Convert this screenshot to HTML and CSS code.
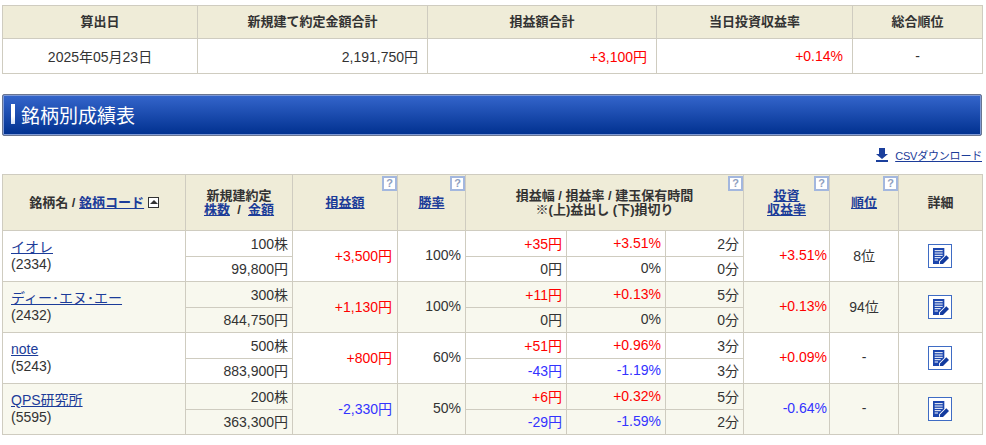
FILE: index.html
```html
<!DOCTYPE html>
<html lang="ja">
<head>
<meta charset="utf-8">
<title>銘柄別成績表</title>
<link rel="stylesheet" href="styles.css">
</head>
<body>
<svg class="sprites" width="0" height="0" aria-hidden="true">
  <symbol id="memo" viewBox="0 0 24 24">
    <path d="M0 0H17V12L9 20V24H0Z" fill="#1b45ad"/>
    <path d="M2.500 4H14.500M2.500 7.500H14.500M2.500 11H14.500M2.500 14.500H11.500M2.500 18H7.500" stroke="#fff" stroke-width="1.500" fill="none"/>
    <path d="M11 20L20 11L24 15L15 24L10 24Z" fill="#123a9e"/>
  </symbol>
</svg>
<table class="summary">
  <colgroup><col class="s1"><col class="s2"><col class="s3"><col class="s4"><col class="s5"></colgroup>
  <tr><th>算出日</th><th>新規建て約定金額合計</th><th>損益額合計</th><th>当日投資収益率</th><th>総合順位</th></tr>
  <tr><td class="c">2025年05月23日</td><td class="r">2,191,750円</td><td class="r up">+3,100円</td><td class="r up">+0.14%</td><td class="c">-</td></tr>
</table>
<h2 class="banner"><span class="mark"></span>銘柄別成績表</h2>
<div class="tools">
  <svg class="dl" viewBox="0 0 12 14" width="12" height="14"><path d="M3 0H9V6H12L6 11L0 6H3ZM0 12H12V14H0Z" fill="#1b3f9c"/></svg>
  <a href="#">CSVダウンロード</a>
</div>
<table class="results">
  <colgroup><col class="c1"><col class="c2"><col class="c3"><col class="c4"><col class="c5"><col class="c6"><col class="c7"><col class="c8"><col class="c9"><col class="c10"></colgroup>
  <thead>
  <tr>
    <th>銘柄名 / <a href="#">銘柄コード</a> <span class="sort"></span></th>
    <th>新規建約定<br><a href="#">株数</a> &nbsp;/&nbsp; <a href="#">金額</a></th>
    <th class="h"><span class="q">?</span><a href="#">損益額</a></th>
    <th class="h"><span class="q">?</span><a href="#">勝率</a></th>
    <th class="h" colspan="3"><span class="q">?</span>損益幅 / 損益率 / 建玉保有時間<br>※(上)益出し (下)損切り</th>
    <th class="h"><span class="q">?</span><a href="#">投資<br>収益率</a></th>
    <th class="h"><span class="q">?</span><a href="#">順位</a></th>
    <th>詳細</th>
  </tr>
  </thead>
  <tbody>
  <tr>
    <td rowspan="2" class="name"><a href="#">イオレ</a><br>(2334)</td><td class="r">100株</td>
    <td rowspan="2" class="r wide up">+3,500円</td><td rowspan="2" class="r">100%</td>
    <td class="r up">+35円</td><td class="r up">+3.51%</td><td class="r">2分</td>
    <td rowspan="2" class="r tight up">+3.51%</td><td rowspan="2" class="c">8位</td>
    <td rowspan="2" class="c"><a class="memo" href="#"><svg width="16" height="16"><use href="#memo"/></svg></a></td>
  </tr>
  <tr class="low"><td class="r">99,800円</td><td class="r">0円</td><td class="r">0%</td><td class="r">0分</td></tr>
  <tr class="alt">
    <td rowspan="2" class="name"><a href="#">ディー･エヌ･エー</a><br>(2432)</td><td class="r">300株</td>
    <td rowspan="2" class="r wide up">+1,130円</td><td rowspan="2" class="r">100%</td>
    <td class="r up">+11円</td><td class="r up">+0.13%</td><td class="r">5分</td>
    <td rowspan="2" class="r tight up">+0.13%</td><td rowspan="2" class="c">94位</td>
    <td rowspan="2" class="c"><a class="memo" href="#"><svg width="16" height="16"><use href="#memo"/></svg></a></td>
  </tr>
  <tr class="alt low"><td class="r">844,750円</td><td class="r">0円</td><td class="r">0%</td><td class="r">0分</td></tr>
  <tr>
    <td rowspan="2" class="name"><a href="#">note</a><br>(5243)</td><td class="r">500株</td>
    <td rowspan="2" class="r wide up">+800円</td><td rowspan="2" class="r">60%</td>
    <td class="r up">+51円</td><td class="r up">+0.96%</td><td class="r">3分</td>
    <td rowspan="2" class="r tight up">+0.09%</td><td rowspan="2" class="c">-</td>
    <td rowspan="2" class="c"><a class="memo" href="#"><svg width="16" height="16"><use href="#memo"/></svg></a></td>
  </tr>
  <tr class="low"><td class="r">883,900円</td><td class="r down">-43円</td><td class="r down">-1.19%</td><td class="r">3分</td></tr>
  <tr class="alt">
    <td rowspan="2" class="name"><a href="#">QPS研究所</a><br>(5595)</td><td class="r">200株</td>
    <td rowspan="2" class="r wide down">-2,330円</td><td rowspan="2" class="r">50%</td>
    <td class="r up">+6円</td><td class="r up">+0.32%</td><td class="r">5分</td>
    <td rowspan="2" class="r tight down">-0.64%</td><td rowspan="2" class="c">-</td>
    <td rowspan="2" class="c"><a class="memo" href="#"><svg width="16" height="16"><use href="#memo"/></svg></a></td>
  </tr>
  <tr class="alt low"><td class="r">363,300円</td><td class="r down">-29円</td><td class="r down">-1.59%</td><td class="r">2分</td></tr>
  </tbody>
</table>
</body>
</html>
```
FILE: styles.css
```css
* { box-sizing: border-box; }
html, body { margin: 0; background: #fff; }
body {
  padding: 5px 4px 0 2px;
  font-family: "Liberation Sans", "Noto Sans CJK JP", sans-serif;
  font-size: 14px;
  color: #333;
  overflow: hidden;
}
.sprites { position: absolute; }
a { color: #1c3c99; text-decoration: underline; }
table { border-collapse: collapse; table-layout: fixed; width: 980px; }
th, td { border: 1px solid #cfccc0; padding: 0; }
th { background: #efecd8; font-size: 13px; font-weight: 700; text-align: center; line-height: 14px; color: #333; }
.r { text-align: right; padding-right: 4px; }
.r.wide { padding-right: 5px; }
.r.tight { padding-right: 2px; }
.c { text-align: center; }
.up { color: #f00; }
.down { color: #3333ff; }
.summary tr:first-child { height: 33px; }
.summary tr:last-child { height: 35px; }
.summary td.r { padding-right: 9px; }
.s1 { width: 195px; } .s2 { width: 230px; } .s3 { width: 229px; } .s4 { width: 196px; } .s5 { width: 130px; }
.banner {
  margin: 20px 0 0;
  width: 980px;
  height: 42px;
  display: flex;
  align-items: center;
  gap: 6px;
  padding: 0 0 2px 8px;
  border: 1px solid #6a7590;
  border-radius: 2px;
  box-shadow: inset 0 0 0 1px #7f9ad6;
  background: linear-gradient(#3566cc, #00308f);
  color: #fff;
  font-size: 19px;
  font-weight: 400;
}
.mark { width: 4px; height: 20px; background: linear-gradient(#fff 60%, #cfdcf5); }
.tools { height: 38px; display: flex; justify-content: flex-end; align-items: center; gap: 7px; font-size: 11px; letter-spacing: -0.2px; padding-bottom: 1px; width: 980px; }
.results tr:first-child th { height: 56px; position: relative; }
.results tbody tr { height: 26px; }
.results tbody tr.low { height: 25px; }
.results tbody td { padding-bottom: 2px; }
.results tbody td.name { padding-bottom: 0; }
.results tbody td.c:last-child { padding: 0 1px 0 0; }
.c1 { width: 183px; } .c2 { width: 107px; } .c3 { width: 105px; } .c4 { width: 68px; } .c5 { width: 101px; } .c6 { width: 99px; } .c7 { width: 78px; } .c8 { width: 86px; } .c9 { width: 69px; } .c10 { width: 84px; }
.name { padding-left: 8px; line-height: 17px; }
.sort { display: inline-block; width: 11px; height: 11px; border: 1px solid #333; vertical-align: -1px; position: relative; background: #fff; }
.sort::after { content: ""; position: absolute; left: 1px; top: 2px; border: 4px solid transparent; border-top: 0; border-bottom: 4px solid #333; }
.q {
  position: absolute; top: 1px; right: 0;
  width: 15px; height: 15px;
  border: 2px solid #a3b7de;
  background: #fff;
  color: #8f9fc0;
  font-size: 11px;
  line-height: 11px;
  text-align: center;
}
.alt td { background: #f8f8ee; }
.memo { display: inline-flex; width: 24px; height: 24px; border: 1px solid #3f6cc4; background: #fff; align-items: center; justify-content: center; vertical-align: middle; padding-left: 2px; }
```
